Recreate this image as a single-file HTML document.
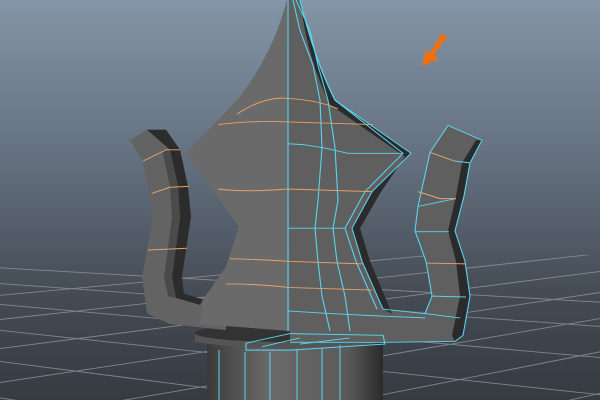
<!DOCTYPE html>
<html><head><meta charset="utf-8"><style>
html,body{margin:0;padding:0;width:600px;height:400px;overflow:hidden;background:#5d6977}
svg{display:block}
</style></head><body>
<svg width="600" height="400" viewBox="0 0 600 400" xmlns="http://www.w3.org/2000/svg">
<defs>
<linearGradient id="bg" x1="0" y1="0" x2="0" y2="1">
<stop offset="0" stop-color="#8495a7"/>
<stop offset="0.45" stop-color="#5f6b79"/>
<stop offset="0.75" stop-color="#434a53"/>
<stop offset="1" stop-color="#363b41"/>
</linearGradient>
<linearGradient id="cyl" x1="0" y1="0" x2="1" y2="0">
<stop offset="0" stop-color="#3a3a3a"/>
<stop offset="0.35" stop-color="#6a6a6a"/>
<stop offset="0.8" stop-color="#5a5a5a"/>
<stop offset="1" stop-color="#2a2a2a"/>
</linearGradient>
<clipPath id="gc"><rect x="0" y="255" width="600" height="145"/></clipPath>
</defs>
<rect width="600" height="400" fill="url(#bg)"/>
<g clip-path="url(#gc)" stroke="#8d9399" stroke-width="0.9" fill="none" opacity="0.85">
<line x1="-50" y1="300" x2="650" y2="235"/>
<line x1="-50" y1="325" x2="650" y2="248"/>
<line x1="-50" y1="355" x2="650" y2="265"/>
<line x1="-50" y1="390" x2="650" y2="285"/>
<line x1="-50" y1="430" x2="650" y2="310"/>
<line x1="-50" y1="480" x2="650" y2="342"/>
<line x1="-50" y1="540" x2="650" y2="382"/>
<line x1="-50" y1="265" x2="650" y2="305"/>
<line x1="-50" y1="280" x2="650" y2="330"/>
<line x1="-50" y1="300" x2="650" y2="362"/>
<line x1="-50" y1="325" x2="650" y2="400"/>
<line x1="-50" y1="355" x2="650" y2="445"/>
<line x1="-50" y1="390" x2="650" y2="500"/>
<line x1="-50" y1="435" x2="650" y2="570"/>
</g>
<!-- base collar & cylinder -->
<rect x="207" y="336" width="176" height="70" fill="url(#cyl)"/>
<path d="M195,333 L195,342 Q290,356 385,342 L385,333" fill="#555"/>
<ellipse cx="290" cy="333" rx="95" ry="9" fill="#333"/>
<g stroke="#59d4ef" stroke-width="1" fill="none">
<path d="M219,350 L219,400 M245,352 L245,400 M270,352 L270,400 M297,350 L297,400 M322,348 L322,400 M340,345 L340,400"/>
</g>
<g transform="scale(1,0.871)">
<!-- left handle -->
<path d="M130,161 L147,149 L166,149 L180,172 L188,214 L191,249 L182,318 L184,337 L203,344 L226,352 L226,379 L170,372 L147,360 L142,318 L153,249 L143,185 Z" fill="#636363"/>
<path d="M147,149 L166,149 L180,172 L188,214 L191,249 L182,318 L184,337 L203,344 L200,350 L176,342 L172,318 L180,250 L178,214 L170,172 Z" fill="#2c2c2c"/>
<path d="M170,172 L178,214 L180,250 L172,318 L176,342 L168,340 L164,318 L172,250 L170,214 L162,172 Z" fill="#4a4a4a"/>
<!-- body -->
<path d="M287,0 Q272,65 237,115 L186,176 L239,260 L226,306 L203,344 L200,372 L290,380 L290,0 Z" fill="#6a6a6a"/>
<path d="M287,0 L300,0 Q315,70 335,115 L411,176 L372,220 L352,262 L362,300 L383,355 L425,358 L432,340 L426,300 L415,265 L418,237 L430,175 L448,144 L482,161 L470,187 L464,225 L455,265 L465,300 L470,340 L463,385 L455,392 L290,393 Z" fill="#5f5f5f"/>
<path d="M300,0 Q315,70 335,115 L411,176 L372,220 L352,262 L362,300 L383,355 L392,360 L370,300 L360,262 L380,222 L405,180 L330,120 Q308,70 300,0 Z" fill="#2b2b2b"/>
<path d="M482,161 L470,187 L464,225 L455,265 L465,300 L470,340 L463,385 L455,392 L452,385 L460,340 L456,300 L448,265 L456,225 L462,187 L476,161 Z" fill="#2b2b2b"/>
<g stroke="#59d4ef" stroke-width="1.1" fill="none">
<path d="M288,0 L288,380"/>
<path d="M293,0 L300,35 L313,75 L320,115 L322,170 L318,230 L315,262 L318,300 L322,340 L330,380"/>
<path d="M296,0 L310,35 L318,75 L328,115 L335,170 L338,230 L333,262 L337,300 L345,340 L350,380"/>
<path d="M300,0 Q315,70 335,115 L403,176 L365,220 L345,262 L356,300 L377,355"/>
<path d="M300,0 Q315,70 335,115 L411,176 L372,220 L352,262 L362,300 L383,355"/>
<path d="M288,165 L303,166 L325,170 L348,176 L403,176"/>
<path d="M288,262 L315,262 L338,262 L345,262"/>
<path d="M288,357 L330,360 L383,363 L425,365"/>
<path d="M448,144 L482,161 L470,187 L464,225 L455,265 L465,300 L470,340 L463,385 L455,392 L383,393 L290,393"/>
<path d="M448,144 L430,175 L418,237 L415,265 L426,300 L432,340 L425,360 L383,355"/>
<path d="M455,185 L470,187"/><path d="M418,237 L456,228"/><path d="M415,266 L449,266"/><path d="M432,340 L466,341"/><path d="M425,360 L460,365"/>
<path d="M246,394 L290,383 L383,385 L385,395 L290,402 L246,402 Z"/>
<path d="M262,398 L300,388 M300,395 L350,388"/>
</g>
<g stroke="#e8a16a" stroke-width="1.1" fill="none">
<path d="M237,131 Q265,110 288,113 Q318,115 338,125"/>
<path d="M218,143 Q255,138 288,140 L373,143"/>
<path d="M218,217 Q245,221 288,217 L372,220"/>
<path d="M230,297 Q260,298 288,300 L362,303"/>
<path d="M226,326 Q260,326 288,330 L372,333"/>
<path d="M143,185 L166,172 L180,172"/>
<path d="M152,222 L170,215 L189,214"/>
<path d="M148,287 L168,286 L187,285"/>
<path d="M418,220 L440,228 L456,228"/>
<path d="M427,302 L466,303"/>
<path d="M430,175 L455,185"/>
</g>
</g>
<!-- orange arrow -->
<path d="M442,33 L447,37 L434,55 L439,59 L422,66 L426,50 L430,53 Z" fill="#f07010"/>
</svg>
</body></html>
